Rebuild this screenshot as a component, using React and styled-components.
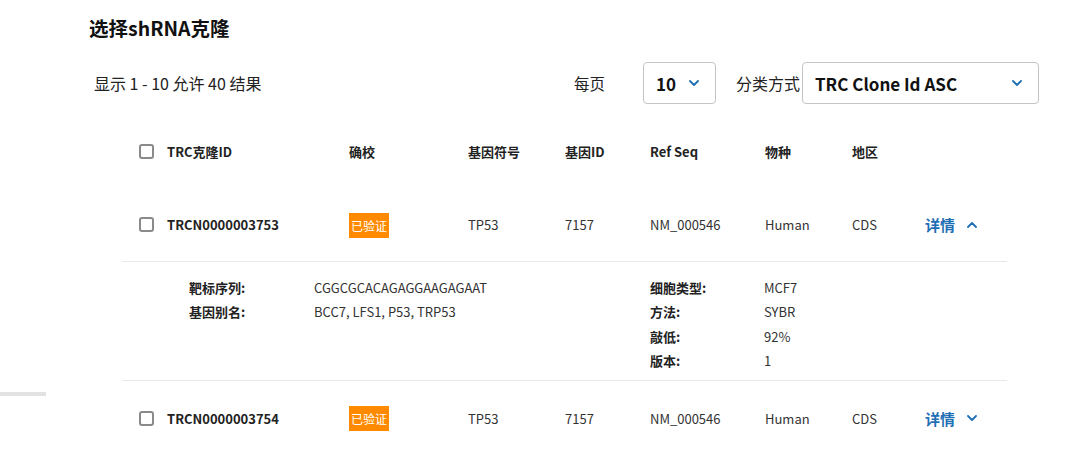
import React from 'react';
import styled, { createGlobalStyle } from 'styled-components';

const GlobalStyle = createGlobalStyle`
    html, body {
        margin: 0;
        padding: 0;
        background: #fff;
    }
    body {
        font-family: "Noto Sans CJK SC", "Noto Sans", sans-serif;
        color: #222;
    }
`;

const columns = ['TRC克隆ID', '确校', '基因符号', '基因ID', 'Ref Seq', '物种', '地区'];

const clones = [
    {
        id: 'TRCN0000003753',
        symbol: 'TP53',
        geneId: '7157',
        refSeq: 'NM_000546',
        species: 'Human',
        region: 'CDS',
        open: true,
        left: [
            ['靶标序列:', 'CGGCGCACAGAGGAAGAGAAT'],
            ['基因别名:', 'BCC7, LFS1, P53, TRP53'],
        ],
        right: [
            ['细胞类型:', 'MCF7'],
            ['方法:', 'SYBR'],
            ['敲低:', '92%'],
            ['版本:', '1'],
        ],
    },
    {
        id: 'TRCN0000003754',
        symbol: 'TP53',
        geneId: '7157',
        refSeq: 'NM_000546',
        species: 'Human',
        region: 'CDS',
        open: false,
    },
];

const Chevron = ({ up, size = 10 }) => (
    <svg width={size} height={size * 0.6} viewBox="0 0 10 6" fill="none">
        <polyline
            points={up ? '1,5 5,1 9,5' : '1,1 5,5 9,1'}
            stroke="#1f6fb5"
            strokeWidth="1.8"
            strokeLinecap="round"
            strokeLinejoin="round"
        />
    </svg>
);

const App = () => {
    return (
        <>
            <GlobalStyle />
            <Page>
                <Gutter>
                    <GutterBar />
                </Gutter>
                <Main>
                    <Title>选择shRNA克隆</Title>
                    <Toolbar>
                        <ResultCount>显示 1 - 10 允许 40 结果</ResultCount>
                        <PerPageLabel>每页</PerPageLabel>
                        <Select width={73}>
                            <span>10</span>
                            <Chevron />
                        </Select>
                        <SortLabel>分类方式</SortLabel>
                        <Select width={237}>
                            <span>TRC Clone Id ASC</span>
                            <Chevron />
                        </Select>
                    </Toolbar>

                    <Table>
                        <HeaderRow>
                            <Checkbox />
                            {columns.map(c => (
                                <HeadCell key={c}>{c}</HeadCell>
                            ))}
                            <span />
                        </HeaderRow>

                        {clones.map(row => (
                            <React.Fragment key={row.id}>
                                <Row divider={row.open}>
                                    <Checkbox />
                                    <IdCell>{row.id}</IdCell>
                                    <span>
                                        <Badge>已验证</Badge>
                                    </span>
                                    <Cell>{row.symbol}</Cell>
                                    <Cell>{row.geneId}</Cell>
                                    <Cell>{row.refSeq}</Cell>
                                    <Cell>{row.species}</Cell>
                                    <Cell>{row.region}</Cell>
                                    <DetailLink>
                                        详情
                                        <Chevron up={row.open} />
                                    </DetailLink>
                                </Row>
                                {row.open && (
                                    <Details>
                                        <DetailList labelWidth={125}>
                                            {row.left.map(([k, v]) => (
                                                <React.Fragment key={k}>
                                                    <DetailLabel>{k}</DetailLabel>
                                                    <DetailValue>{v}</DetailValue>
                                                </React.Fragment>
                                            ))}
                                        </DetailList>
                                        <DetailList labelWidth={114}>
                                            {row.right.map(([k, v]) => (
                                                <React.Fragment key={k}>
                                                    <DetailLabel>{k}</DetailLabel>
                                                    <DetailValue>{v}</DetailValue>
                                                </React.Fragment>
                                            ))}
                                        </DetailList>
                                    </Details>
                                )}
                            </React.Fragment>
                        ))}
                    </Table>
                </Main>
            </Page>
        </>
    );
};

export default App;

const Page = styled.div`
    display: flex;
    width: 1080px;
    height: 456px;
    overflow: hidden;
`;

const Gutter = styled.div`
    width: 46px;
    flex-shrink: 0;
`;

const GutterBar = styled.div`
    margin-top: 392px;
    height: 4px;
    background: #e2e2e2;
`;

const Main = styled.div`
    flex: 1;
    padding-left: 43px;
`;

const Title = styled.h2`
    margin: 0;
    padding-top: 14px;
    font-size: 19.5px;
    line-height: 28px;
    font-weight: 700;
    color: #111;
`;

const Toolbar = styled.div`
    display: flex;
    align-items: center;
    height: 42px;
    margin-top: 20px;
    padding: 0 41px 0 5px;
`;

const ResultCount = styled.div`
    font-size: 16px;
    color: #222;
    flex: 1;
`;

const PerPageLabel = styled.div`
    font-size: 15.5px;
    color: #222;
    margin-right: 38px;
`;

const SortLabel = styled.div`
    font-size: 16px;
    color: #222;
    margin: 0 2px 0 20px;
`;

const Select = styled.div`
    box-sizing: border-box;
    width: ${p => p.width}px;
    height: 42px;
    border: 1px solid #c4c4c4;
    border-radius: 4px;
    display: flex;
    align-items: center;
    justify-content: space-between;
    padding: 0 16px 0 12px;
    font-size: 17px;
    font-weight: 700;
    color: #111;
`;

const Table = styled.div`
    margin-left: 33px;
    margin-top: 26px;
    width: 885px;
`;

const gridCols = '28px 182px 119px 97px 85px 115px 87px 73px 1fr';

const HeaderRow = styled.div`
    display: grid;
    grid-template-columns: ${gridCols};
    align-items: center;
    height: 58px;
    padding: 0 0 16px 17px;
    box-sizing: border-box;
`;

const HeadCell = styled.div`
    font-size: 13px;
    font-weight: 700;
    color: #222;
`;

const Row = styled.div`
    display: grid;
    grid-template-columns: ${gridCols};
    align-items: center;
    height: 74px;
    padding-left: 17px;
    box-sizing: border-box;
    border-bottom: ${p => (p.divider ? '1px solid #e8e8e8' : 'none')};
`;

const Checkbox = styled.span`
    display: block;
    width: 15px;
    height: 15px;
    box-sizing: border-box;
    border: 2px solid #8a8a8a;
    border-radius: 3px;
`;

const Cell = styled.div`
    font-size: 13px;
    color: #333;
`;

const IdCell = styled(Cell)`
    font-weight: 700;
    color: #222;
`;

const Badge = styled.span`
    display: inline-flex;
    align-items: center;
    justify-content: center;
    width: 40px;
    height: 25px;
    background: #ff8a00;
    color: #fff;
    font-size: 12px;
`;

const DetailLink = styled.div`
    display: flex;
    align-items: center;
    gap: 12px;
    font-size: 15px;
    font-weight: 700;
    color: #1f6fb5;
`;

const Details = styled.div`
    display: grid;
    grid-template-columns: 461px 1fr;
    padding: 13px 0 7px 67px;
    border-bottom: 1px solid #e8e8e8;
`;

const DetailList = styled.div`
    display: grid;
    grid-template-columns: ${p => p.labelWidth}px 1fr;
    grid-auto-rows: 24.5px;
    align-content: start;
    align-items: center;
`;

const DetailLabel = styled.div`
    font-size: 13px;
    font-weight: 700;
    color: #222;
`;

const DetailValue = styled.div`
    font-size: 13px;
    color: #333;
`;
